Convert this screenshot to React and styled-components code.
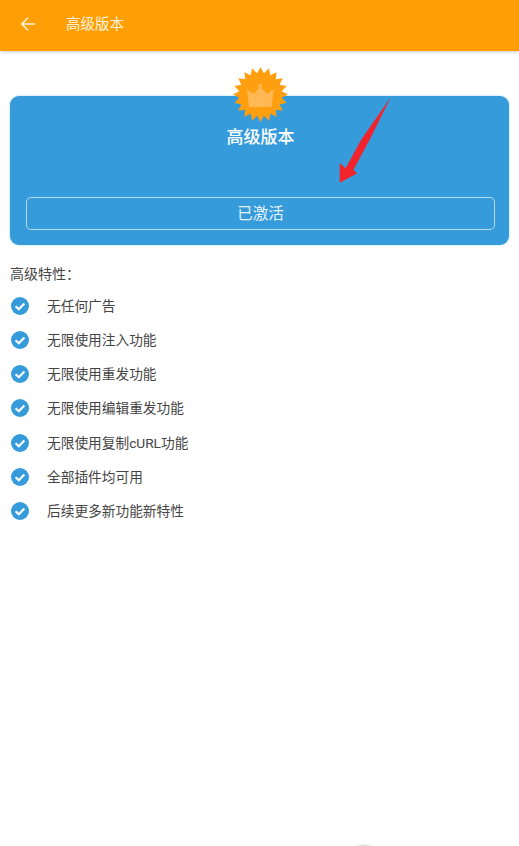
import React from "react";
import styled, { createGlobalStyle } from "styled-components";

const Global = createGlobalStyle`
  html, body { margin: 0; padding: 0; background: #fff; }
  body { font-family: "Roboto", "Noto Sans CJK SC", sans-serif; overflow: hidden; }
  * { box-sizing: border-box; }
`;

const Page = styled.div`
  position: relative;
  width: 519px;
  height: 846px;
  background: #fff;
  overflow: hidden;
`;

const AppBar = styled.header`
  display: flex;
  align-items: center;
  height: 51px;
  padding: 0 0 3px 20px;
  background: #ff9f05;
  box-shadow: 0 1px 3px rgba(0, 0, 0, 0.22);
  color: #fff3dc;
`;

const BackButton = styled.svg`
  width: 16px;
  height: 16px;
  margin-right: 30px;
  flex: none;
`;

const BarTitle = styled.h1`
  margin: 2px 0 0;
  font-size: 14.5px;
  font-weight: 400;
  line-height: 20px;
`;

const Content = styled.main`
  padding: 45px 10px 0;
`;

const PlanCard = styled.section`
  position: relative;
  display: flex;
  flex-direction: column;
  align-items: center;
  height: 149px;
  padding: 29px 14px 15px 16px;
  border-radius: 9px;
  background: #359bdb;
  box-shadow: 0 0 2px rgba(53, 155, 219, 0.55);
`;

const Badge = styled.svg`
  position: absolute;
  left: 223px;
  top: -29px;
  width: 55px;
  height: 55px;
`;

const Arrow = styled.svg`
  position: absolute;
  left: 326px;
  top: 0;
  width: 58px;
  height: 90px;
`;

const PlanTitle = styled.h2`
  margin: 0;
  font-size: 17px;
  font-weight: 500;
  line-height: 24px;
  color: #fff;
`;

const ActivatedButton = styled.button`
  width: 100%;
  height: 33px;
  margin-top: auto;
  padding: 0;
  border: 1px solid #b4dcf3;
  border-radius: 5px;
  background: transparent;
  color: #e6f3fb;
  font-family: inherit;
  font-size: 15.5px;
  line-height: 30px;
`;

const SectionLabel = styled.h3`
  margin: 19px 0 0;
  font-size: 14px;
  font-weight: 400;
  line-height: 20px;
  color: #444;
`;

const FeatureList = styled.ul`
  display: flex;
  flex-direction: column;
  gap: 14.15px;
  margin: 12px 0 0;
  padding: 0 0 0 1px;
  list-style: none;
`;

const Feature = styled.li`
  display: flex;
  align-items: center;
  height: 20px;
  font-size: 13.7px;
  line-height: 20px;
  color: #444;
`;

const Check = styled.svg`
  width: 18px;
  height: 18px;
  margin-right: 18px;
  flex: none;
`;

const EdgeSmudge = styled.div`
  position: absolute;
  left: 354px;
  bottom: 0;
  width: 20px;
  height: 2px;
  border-radius: 50%;
  background: radial-gradient(ellipse at center bottom, #d4d4d4, rgba(255, 255, 255, 0) 75%);
`;

const features = [
  "无任何广告",
  "无限使用注入功能",
  "无限使用重发功能",
  "无限使用编辑重发功能",
  "无限使用复制cURL功能",
  "全部插件均可用",
  "后续更多新功能新特性",
];

function starPoints() {
  const pts = [];
  const n = 20;
  for (let i = 0; i < n * 2; i++) {
    const r = i % 2 === 0 ? 27.5 : 21.5;
    const a = (Math.PI * i) / n - Math.PI / 2;
    pts.push(`${(27.5 + r * Math.cos(a)).toFixed(2)},${(27.5 + r * Math.sin(a)).toFixed(2)}`);
  }
  return pts.join(" ");
}

export default function App() {
  return (
    <Page>
      <Global />
      <AppBar>
        <BackButton viewBox="0 0 16 16" fill="none" stroke="currentColor" strokeWidth="1.6" strokeLinecap="round" strokeLinejoin="round">
          <path d="M14.5 8H2M7.5 2.2 1.8 8l5.7 5.8" />
        </BackButton>
        <BarTitle>高级版本</BarTitle>
      </AppBar>
      <Content>
        <PlanCard>
          <Badge viewBox="0 0 55 55">
            <polygon points={starPoints()} fill="#ff9f0f" />
            <path d="M14 22.3 20.5 27 27.3 19.5 34 27 40.7 22.3 38.5 40H16z" fill="#ffb854" />
            <circle cx="27.3" cy="19" r="2" fill="#ffb854" />
          </Badge>
          <Arrow viewBox="0 0 58 90">
            <path d="M54.7 1.3 33.5 44 17.3 74 21.3 77.3 3.7 86.7 3.7 67 9.7 72.3 25 44Z" fill="#f2232b" />
          </Arrow>
          <PlanTitle>高级版本</PlanTitle>
          <ActivatedButton>已激活</ActivatedButton>
        </PlanCard>
        <SectionLabel>高级特性：</SectionLabel>
        <FeatureList>
          {features.map((f) => (
            <Feature key={f}>
              <Check viewBox="0 0 18 18">
                <circle cx="9" cy="9" r="9" fill="#359bdb" />
                <path d="M4.6 9.2 7.8 12.2l5.6-5.8" fill="none" stroke="#fff" strokeWidth="2.2" />
              </Check>
              {f}
            </Feature>
          ))}
        </FeatureList>
      </Content>
      <EdgeSmudge />
    </Page>
  );
}
